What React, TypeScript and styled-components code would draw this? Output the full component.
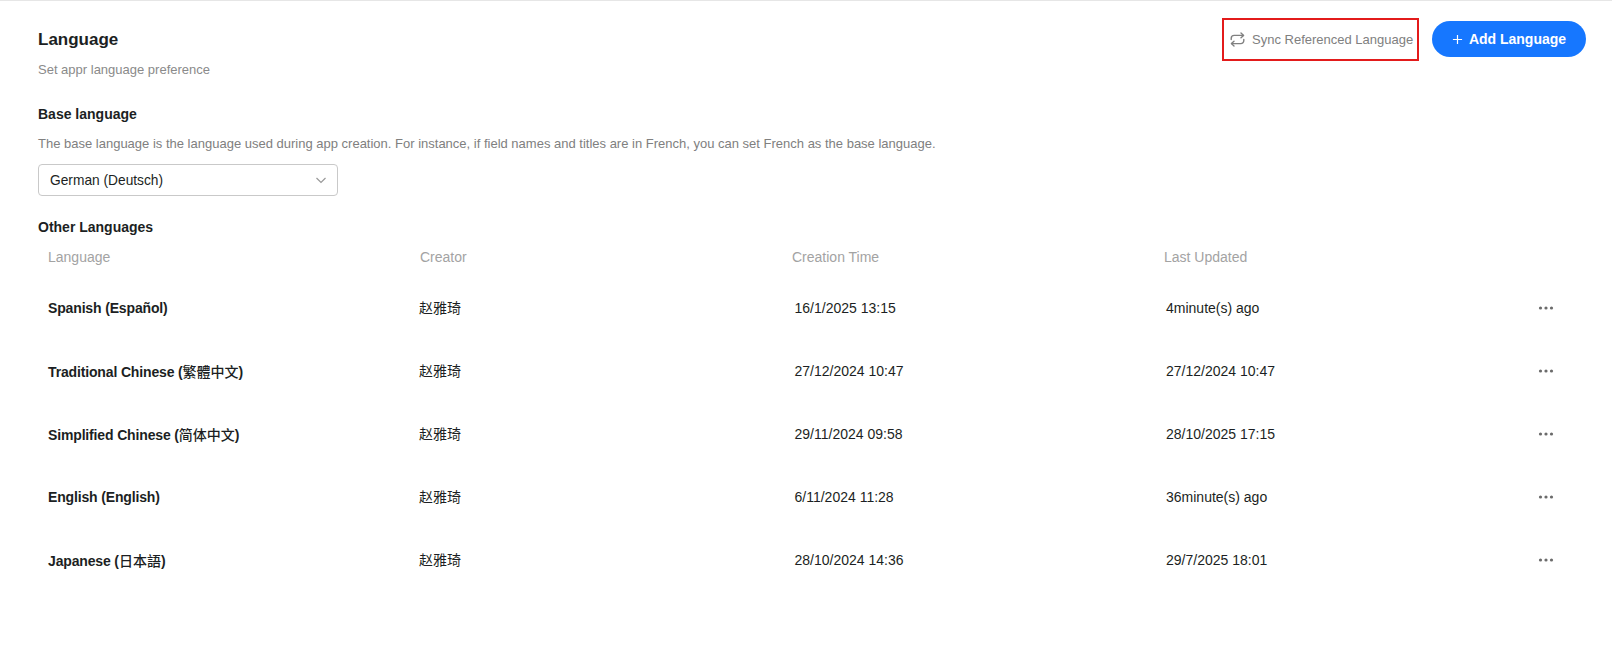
import React from "react";
import styled, { createGlobalStyle } from "styled-components";

const GlobalStyle = createGlobalStyle`
  html, body {
    margin: 0;
    padding: 0;
    background: #fff;
  }
  body {
    font-family: "Liberation Sans", "Noto Sans CJK SC", sans-serif;
    color: #1c1f23;
  }
`;

const Page = styled.div`
  width: 1612px;
  height: 650px;
  box-sizing: border-box;
  border-top: 1px solid #e6e6e6;
  padding: 17px 0 0 38px;
  overflow: hidden;
`;

const Header = styled.div`
  display: flex;
  justify-content: space-between;
  align-items: flex-start;
  padding-right: 26px;
`;

const TitleBlock = styled.div`
  padding-top: 12px;
`;

const Title = styled.div`
  font-size: 17px;
  font-weight: 700;
  line-height: 20px;
`;

const Subtitle = styled.div`
  margin-top: 12px;
  font-size: 13px;
  line-height: 16px;
  color: #8a8a8a;
`;

const Actions = styled.div`
  display: flex;
  align-items: center;
  gap: 13px;
`;

const SyncButton = styled.div`
  display: flex;
  align-items: center;
  gap: 7px;
  box-sizing: border-box;
  width: 197px;
  height: 43px;
  padding-left: 6px;
  border: 2px solid #e31b1b;
  font-size: 13px;
  color: #808080;
`;

const AddButton = styled.div`
  display: flex;
  align-items: center;
  justify-content: center;
  gap: 6px;
  width: 154px;
  height: 36px;
  margin-bottom: 1px;
  border-radius: 18px;
  background: #1677ff;
  color: #fff;
  font-size: 14px;
  font-weight: 700;
`;

const SectionTitle = styled.div`
  font-size: 14px;
  font-weight: 700;
  line-height: 18px;
`;

const BaseSection = styled.div`
  margin-top: 27px;
`;

const Description = styled.div`
  margin-top: 13px;
  font-size: 13px;
  line-height: 16px;
  color: #808080;
`;

const Select = styled.div`
  display: flex;
  align-items: center;
  justify-content: space-between;
  box-sizing: border-box;
  width: 300px;
  height: 32px;
  margin-top: 12px;
  padding: 0 10px 0 11px;
  border: 1px solid #c9c9c9;
  border-radius: 4px;
  font-size: 13.75px;
  color: #1c1f23;
`;

const OtherSection = styled.div`
  margin-top: 22px;
`;

const Table = styled.div`
  margin-top: 6px;
  width: 1530px;
`;

const HeadRow = styled.div`
  display: grid;
  grid-template-columns: 372px 372px 372px 1fr;
  padding-left: 10px;
  height: 30px;
  align-items: center;
  font-size: 14px;
  color: #a3a3a3;
`;

const Row = styled.div`
  display: grid;
  grid-template-columns: 371px 375.5px 371.5px 1fr 30px;
  padding-left: 10px;
  height: 63px;
  align-items: center;
  font-size: 14px;
  color: #1c1f23;
`;

const Rows = styled.div`
  margin-top: 4px;
`;

const NameCell = styled.div`
  font-weight: 700;
  letter-spacing: -0.15px;
`;

const NativeName = styled.span`
  font-weight: 500;
  letter-spacing: 0;
`;

const CreatorCell = styled.div`
  padding-bottom: 2px;
`;

const MoreIcon = styled.svg`
  width: 16px;
  height: 4px;
  justify-self: start;
`;

const rows = [
  { name: "Spanish (Español)", native: "", creator: "赵雅琦", created: "16/1/2025 13:15", updated: "4minute(s) ago" },
  { name: "Traditional Chinese", native: "繁體中文", creator: "赵雅琦", created: "27/12/2024 10:47", updated: "27/12/2024 10:47" },
  { name: "Simplified Chinese", native: "简体中文", creator: "赵雅琦", created: "29/11/2024 09:58", updated: "28/10/2025 17:15" },
  { name: "English (English)", native: "", creator: "赵雅琦", created: "6/11/2024 11:28", updated: "36minute(s) ago" },
  { name: "Japanese", native: "日本語", creator: "赵雅琦", created: "28/10/2024 14:36", updated: "29/7/2025 18:01" },
];

function SyncIcon(): JSX.Element {
  return (
    <svg width="15" height="15" viewBox="0 0 15 15" fill="none" stroke="#808080" strokeWidth="1.4" strokeLinecap="round" strokeLinejoin="round">
      <path d="M11 1l2.6 2.4L11 5.8" />
      <path d="M1.2 7.5V6.4a3 3 0 0 1 3-3h9.2" />
      <path d="M4 14l-2.6-2.4L4 9.2" />
      <path d="M13.8 7.5v1.1a3 3 0 0 1-3 3H1.6" />
    </svg>
  );
}

function App(): JSX.Element {
  return (
    <Page>
      <GlobalStyle />
      <Header>
        <TitleBlock>
          <Title>Language</Title>
          <Subtitle>Set appr language preference</Subtitle>
        </TitleBlock>
        <Actions>
          <SyncButton>
            <SyncIcon />
            Sync Referenced Language
          </SyncButton>
          <AddButton>
            <svg width="11" height="11" viewBox="0 0 12 12" stroke="#fff" strokeWidth="1.3">
              <path d="M6 1v10M1 6h10" />
            </svg>
            Add Language
          </AddButton>
        </Actions>
      </Header>
      <BaseSection>
        <SectionTitle>Base language</SectionTitle>
        <Description>
          The base language is the language used during app creation. For instance, if field names and titles are in French, you can set French as the base language.
        </Description>
        <Select>
          German (Deutsch)
          <svg width="12" height="12" viewBox="0 0 12 12" fill="none" stroke="#999" strokeWidth="1.2">
            <path d="M1.5 4l4.5 4.5L10.5 4" />
          </svg>
        </Select>
      </BaseSection>
      <OtherSection>
        <SectionTitle>Other Languages</SectionTitle>
        <Table>
          <HeadRow>
            <div>Language</div>
            <div>Creator</div>
            <div>Creation Time</div>
            <div>Last Updated</div>
          </HeadRow>
          <Rows>
            {rows.map((row) => (
              <Row key={row.name}>
                <NameCell>
                  {row.name}
                  {row.native && (
                    <>
                      {" ("}
                      <NativeName>{row.native}</NativeName>
                      {")"}
                    </>
                  )}
                </NameCell>
                <CreatorCell>{row.creator}</CreatorCell>
                <div>{row.created}</div>
                <div>{row.updated}</div>
                <MoreIcon viewBox="0 0 16 4" fill="#6b6b6b">
                  <circle cx="2.5" cy="2" r="1.6" />
                  <circle cx="8" cy="2" r="1.6" />
                  <circle cx="13.5" cy="2" r="1.6" />
                </MoreIcon>
              </Row>
            ))}
          </Rows>
        </Table>
      </OtherSection>
    </Page>
  );
}

export default App;
